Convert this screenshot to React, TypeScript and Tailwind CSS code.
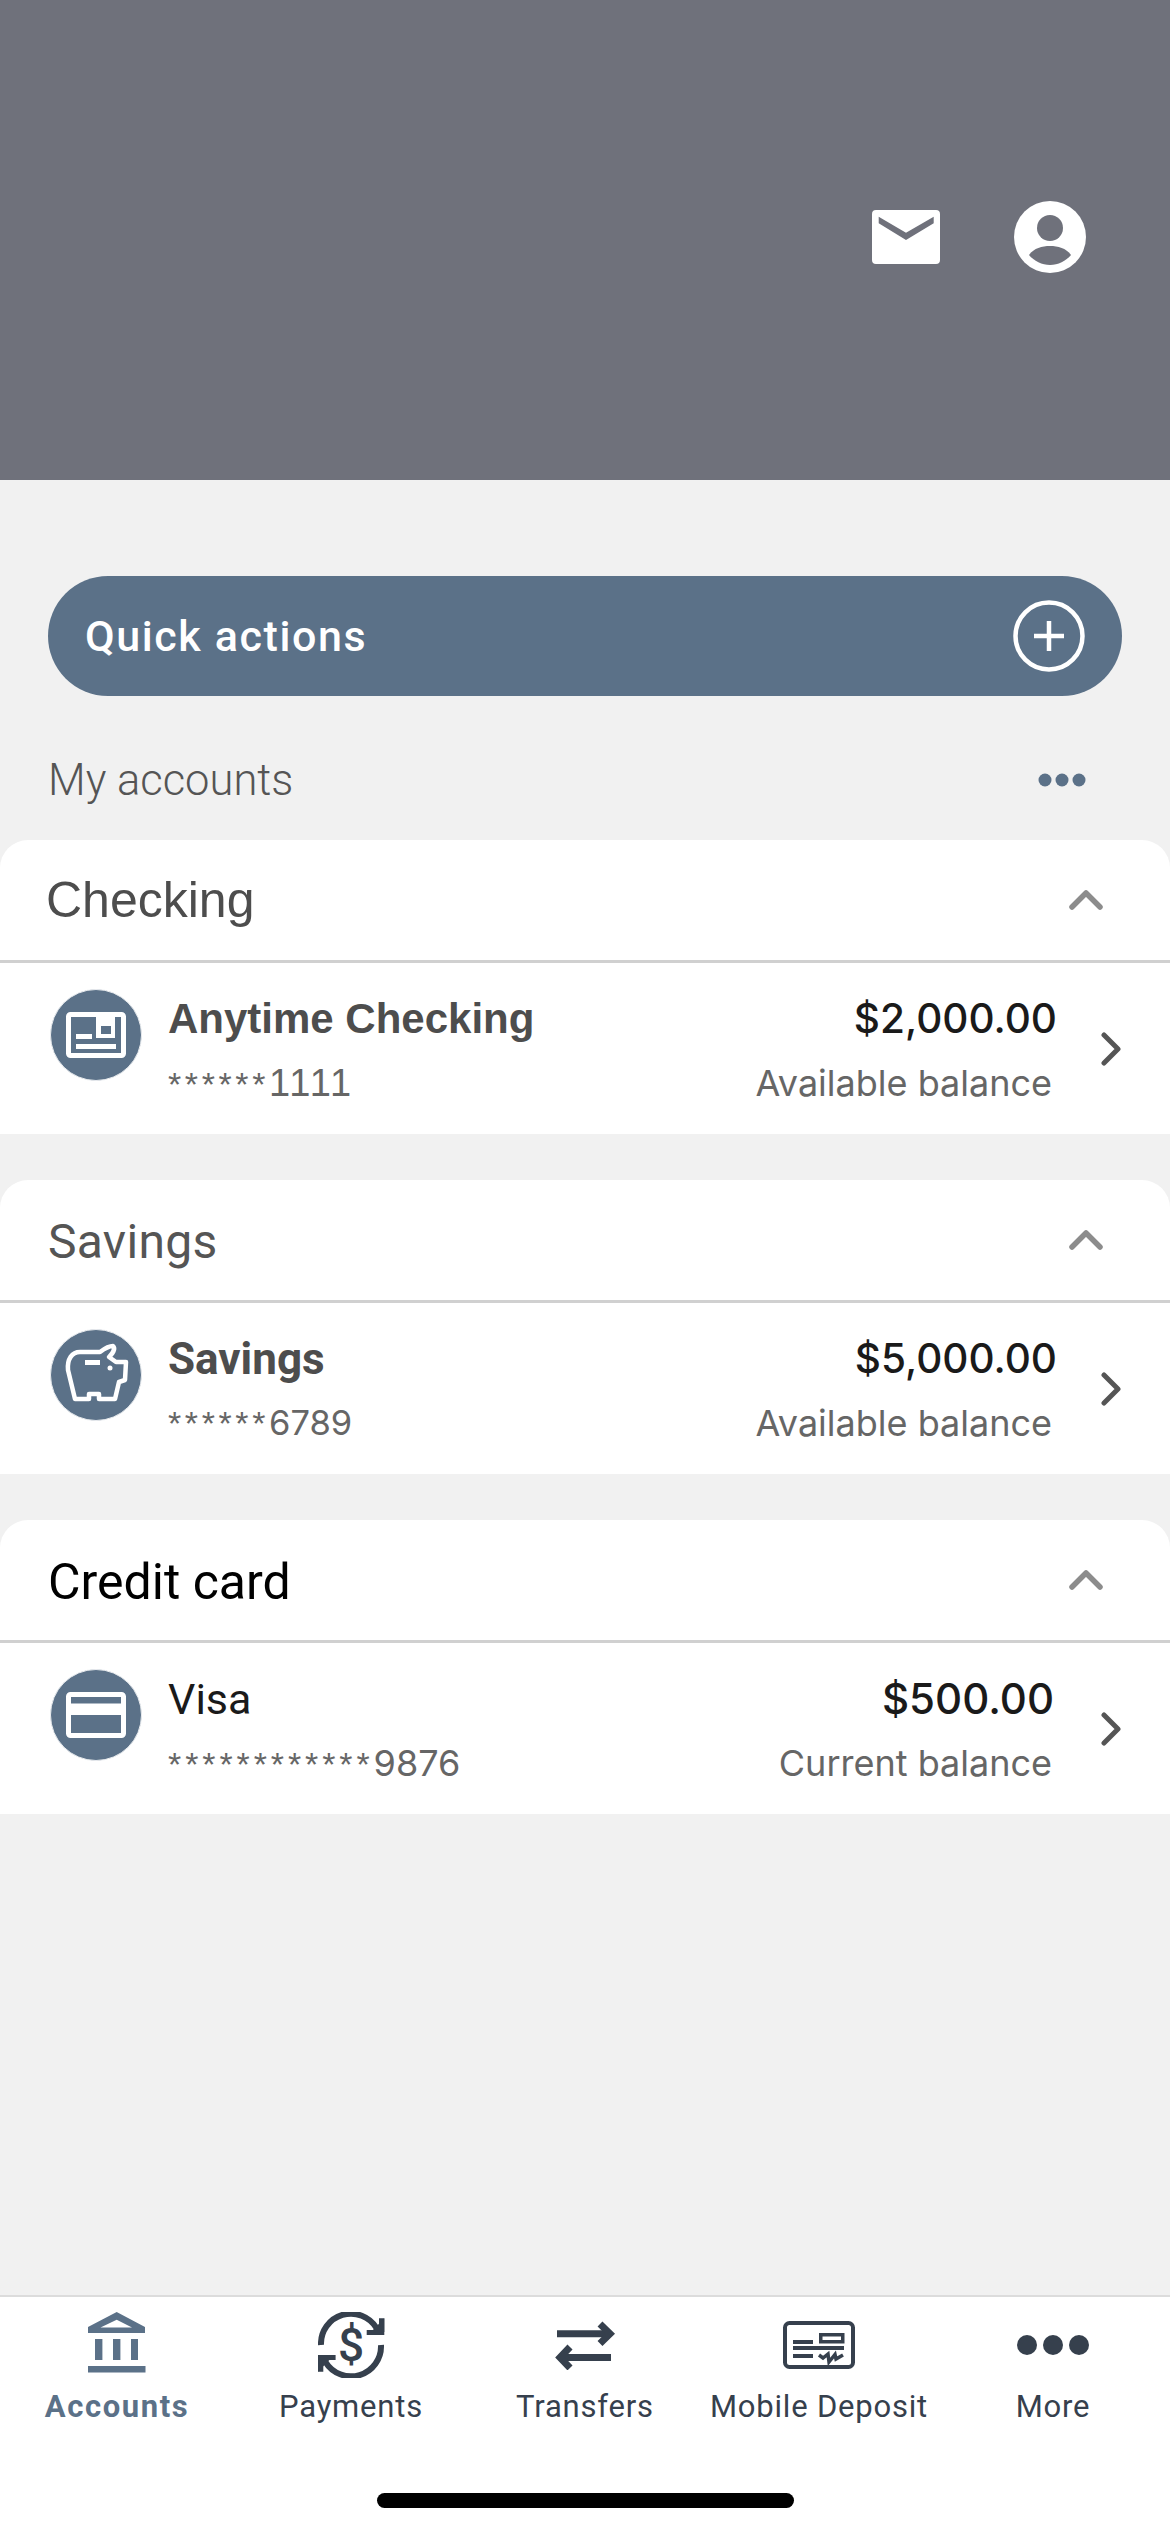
import React from 'react';

const roboto = { fontFamily: 'Roboto, sans-serif' };

function MailIcon() {
  return (
    <svg width="68" height="54" viewBox="0 0 68 54">
      <path fillRule="evenodd" fill="#fff" d="M4 0H64A4 4 0 0 1 68 4V50A4 4 0 0 1 64 54H4A4 4 0 0 1 0 50V4A4 4 0 0 1 4 0ZM6.700 6.700V13.300L34 30L61.700 13.300V6.700L34 22.700Z" />
    </svg>
  );
}

function ProfileIcon() {
  return (
    <svg width="72" height="72" viewBox="0 0 72 72">
      <circle cx="36" cy="36" r="36" fill="#fff" />
      <circle cx="36" cy="27" r="13" fill="#6f717b" />
      <path fill="#6f717b" d="M15 54C20 47 28 45 36 45C44 45 52 47 57 54C52 60 44 64 36 64C28 64 20 60 15 54Z" />
    </svg>
  );
}

function CheckingGlyph() {
  return (
    <>
      <rect x="18.500" y="25.500" width="55" height="41" rx="2" fill="none" stroke="#fff" strokeWidth="5" />
      <path fill="#fff" fillRule="evenodd" d="M46 23H65V49H46ZM51 37V45H61V37Z" />
      <rect x="26" y="45" width="16" height="5" fill="#fff" />
      <rect x="26" y="55" width="40" height="5" fill="#fff" />
    </>
  );
}

function PigGlyph() {
  return (
    <>
      <path
        fill="none"
        stroke="#fff"
        strokeWidth="4.500"
        strokeLinejoin="round"
        d="M30 23H50C54 20 58 17 63 17C65 19 64 23 59 28L66 33H76L75 51L69 53L65 70H49V65H39V70H25L18 41C17 30 22 23 30 23Z"
      />
      <rect x="35" y="31" width="15" height="5" fill="#fff" />
      <circle cx="60" cy="39" r="2.500" fill="#fff" />
    </>
  );
}

function CardGlyph() {
  return (
    <>
      <rect x="18.500" y="25.500" width="55" height="41" rx="2" fill="none" stroke="#fff" strokeWidth="5" />
      <rect x="18" y="34.500" width="56" height="11.500" fill="#fff" />
    </>
  );
}

function AccountIcon({ glyph }: { glyph: React.ReactNode }) {
  return (
    <svg width="92" height="92" viewBox="0 0 92 92" className="shrink-0">
      <circle cx="46" cy="46" r="45.500" fill="#5b7188" stroke="#e9ecef" strokeWidth="1" />
      {glyph}
    </svg>
  );
}

function ChevronUp() {
  return (
    <svg width="34" height="20" viewBox="0 0 34 20">
      <path d="M3 17L17 3L31 17" fill="none" stroke="#8c8c8c" strokeWidth="5.500" strokeLinecap="round" strokeLinejoin="round" />
    </svg>
  );
}

function ChevronRight() {
  return (
    <svg width="20" height="34" viewBox="0 0 20 34" className="shrink-0">
      <path d="M3 3L17 17L3 31" fill="none" stroke="#555" strokeWidth="5" strokeLinecap="round" strokeLinejoin="round" />
    </svg>
  );
}

function BankIcon() {
  return (
    <svg width="58" height="61" viewBox="0 0 58 61" fill="#5b7188" className="mb-[5px]">
      <path fillRule="evenodd" d="M28.700 0L57 15V21H0V15ZM28.700 7.700L12.500 15.600H44Z" />
      <rect x="7" y="27" width="7.400" height="21" />
      <rect x="25" y="27" width="7.400" height="21" />
      <rect x="43" y="27" width="7" height="21" />
      <rect x="0" y="54" width="57.500" height="6.500" />
    </svg>
  );
}

function PaymentsIcon() {
  return (
    <svg width="67" height="66" viewBox="0 0 67 66" fill="none" stroke="#36404d" strokeWidth="6">
      <path d="M3 33A30 30 0 0 1 58.700 16.300" />
      <path d="M63 33A30 30 0 0 1 7.300 49.700" />
      <path fill="#36404d" stroke="none" d="M66.300 6.300V23H48.700V18H61V6.300Z" />
      <path fill="#36404d" stroke="none" d="M0 59.700V43H17.600V48H5.300V59.700Z" />
      <path fill="#36404d" stroke="none" d="M66.300 6.300V20H53Z" />
      <path fill="#36404d" stroke="none" d="M0 59.700V46H13.300Z" />
      <text x="33" y="49" textAnchor="middle" fontSize="46" fontWeight="500" fill="#36404d" stroke="none" fontFamily="Roboto, sans-serif">$</text>
    </svg>
  );
}

function TransfersIcon() {
  return (
    <svg width="62" height="49" viewBox="0 0 62 49" fill="none" stroke="#36404d" strokeWidth="7">
      <path d="M3 12.700H56" />
      <path d="M46 3L56 12.700L46 22.500" />
      <path d="M57 36.500H6" />
      <path d="M16 26L6 36.500L16 47" />
    </svg>
  );
}

function DepositIcon() {
  return (
    <svg width="72" height="48" viewBox="0 0 72 48" fill="none" stroke="#36404d">
      <rect x="2" y="2" width="68" height="44" rx="4.500" strokeWidth="4" />
      <rect x="37.750" y="13.750" width="22" height="7" strokeWidth="3.500" />
      <path d="M10 21H30M10 27H61M10 35H30" strokeWidth="4" />
      <path d="M36 34L40 37L45 33L46 41L52 33.500L53 38L60 34" strokeWidth="3.500" />
    </svg>
  );
}

function MoreIcon() {
  return (
    <svg width="72" height="20" viewBox="0 0 72 20" fill="#36404d">
      <circle cx="10" cy="10" r="10" />
      <circle cx="36" cy="10" r="10" />
      <circle cx="62" cy="10" r="10" />
    </svg>
  );
}

type Account = {
  title: string;
  titleClass: string;
  titleFont: string;
  heading: string;
  headingClass: string;
  headingFont: string;
  mask: string;
  maskClass: string;
  digits: string;
  digitsClass: string;
  digitsFont: string;
  amount: string;
  amountClass: string;
  balance: string;
  glyph: React.ReactNode;
};

const accounts: Account[] = [
  {
    heading: 'Checking',
    headingClass: 'text-[50px] text-[#4d4d4d] pl-[46px]',
    headingFont: '"Liberation Sans", sans-serif',
    title: 'Anytime Checking',
    titleClass: 'text-[42px] font-bold text-[#4d4d4d]',
    titleFont: '"Liberation Sans", sans-serif',
    mask: '******',
    maskClass: 'tracking-[3.600px]',
    digits: '1111',
    digitsClass: 'text-[38px] tracking-[2px]',
    digitsFont: '"Liberation Sans", sans-serif',
    amount: '$2,000.00',
    amountClass: 'text-[40.500px] -mr-[3px]',
    balance: 'Available balance',
    glyph: <CheckingGlyph />,
  },
  {
    heading: 'Savings',
    headingClass: 'text-[48px] tracking-[0.3px] text-[#555] pl-[48px] mt-[3px]',
    headingFont: 'Roboto, sans-serif',
    title: 'Savings',
    titleClass: 'text-[44px] font-bold text-[#4d4d4d]',
    titleFont: 'Roboto, sans-serif',
    mask: '******',
    maskClass: 'tracking-[3.600px]',
    digits: '6789',
    digitsClass: 'text-[34.500px]',
    digitsFont: 'Inter, sans-serif',
    amount: '$5,000.00',
    amountClass: 'text-[40.500px] -mr-[3px]',
    balance: 'Available balance',
    glyph: <PigGlyph />,
  },
  {
    heading: 'Credit card',
    headingClass: 'text-[50px] text-black pl-[48px] mt-[5px]',
    headingFont: 'Roboto, sans-serif',
    title: 'Visa',
    titleClass: 'text-[43px] text-[#1a1a1a]',
    titleFont: 'Roboto, sans-serif',
    mask: '************',
    maskClass: 'tracking-[3.900px]',
    digits: '9876',
    digitsClass: 'text-[36px]',
    digitsFont: 'Inter, sans-serif',
    amount: '$500.00',
    amountClass: 'text-[42px]',
    balance: 'Current balance',
    glyph: <CardGlyph />,
  },
];

function AccountCard({ account }: { account: Account }) {
  return (
    <section className="bg-white rounded-t-[28px]">
      <div className="h-[120px] flex items-center justify-between pr-[67px]">
        <h2 className={account.headingClass} style={{ fontFamily: account.headingFont }}>{account.heading}</h2>
        <ChevronUp />
      </div>
      <div className="h-[3px] bg-[#d0d0d0]" />
      <div className="h-[171px] flex pl-[50px] pr-[49px] pt-[26px]">
        <AccountIcon glyph={account.glyph} />
        <div className="flex-1 pl-[26px] flex flex-col">
          <div className={`${account.titleClass} leading-[48px] mt-[6px]`} style={{ fontFamily: account.titleFont }}>{account.title}</div>
          <div className="mt-[18px] leading-[44px] text-[#666] whitespace-nowrap" style={{ fontFamily: account.digitsFont }}>
            <span className={`text-[34px] ${account.maskClass}`} style={{ fontFamily: '"Liberation Sans", sans-serif' }}>{account.mask}</span>
            <span className={account.digitsClass}>{account.digits}</span>
          </div>
        </div>
        <div className="flex flex-col items-end" style={{ fontFamily: 'Inter, sans-serif' }}>
          <div className={`${account.amountClass} font-medium leading-[48px] text-[#1a1a1a] mt-[6px]`}>{account.amount}</div>
          <div className="mt-[18px] text-[36px] leading-[44px] text-[#666] mr-[2px]">{account.balance}</div>
        </div>
        <div className="ml-[47px] mt-[43px]"><ChevronRight /></div>
      </div>
    </section>
  );
}

const tabs = [
  { label: 'Accounts', icon: <BankIcon />, active: true },
  { label: 'Payments', icon: <PaymentsIcon />, active: false },
  { label: 'Transfers', icon: <TransfersIcon />, active: false },
  { label: 'Mobile Deposit', icon: <DepositIcon />, active: false },
  { label: 'More', icon: <MoreIcon />, active: false },
];

export default function App() {
  return (
    <div className="w-[1170px] h-[2532px] flex flex-col bg-[#f1f1f1] relative overflow-hidden" style={roboto}>
      <header className="h-[480px] bg-[#6f717b] flex items-start justify-end gap-[74px] pt-[201px] pr-[84px] shrink-0">
        <div className="pt-[9px]"><MailIcon /></div>
        <ProfileIcon />
      </header>

      <main className="flex-1">
        <button className="mt-[96px] ml-[48px] w-[1074px] h-[120px] rounded-full bg-[#5b7188] flex items-center justify-between pl-[37px] pr-[37px] text-white">
          <span className="text-[43px] font-medium tracking-[1.600px]">Quick actions</span>
          <svg width="72" height="72" viewBox="0 0 72 72" fill="none" stroke="#fff" strokeWidth="4.500">
            <circle cx="36" cy="36" r="33.500" />
            <path d="M36 21V51M21 36H51" />
          </svg>
        </button>

        <div className="h-[144px] flex items-start justify-between pl-[48px] pr-[84px] pt-[59px]">
          <span className="text-[43.500px] font-light leading-[52px] text-[#555]">My accounts</span>
          <svg width="48" height="14" viewBox="0 0 48 14" fill="#5b7188" className="mt-[18px]">
            <circle cx="7" cy="7" r="6.500" />
            <circle cx="24" cy="7" r="6.500" />
            <circle cx="41" cy="7" r="6.500" />
          </svg>
        </div>

        <div className="flex flex-col gap-[46px]">
          {accounts.map(account => (
            <AccountCard key={account.heading} account={account} />
          ))}
        </div>
      </main>

      <nav className="h-[237px] shrink-0 bg-white border-t-2 border-[#dcdcdc] flex items-start">
        {tabs.map(tab => (
          <div key={tab.label} className="w-[234px] flex flex-col items-center">
            <div className="h-[90px] mt-[3px] flex items-center justify-center">{tab.icon}</div>
            <span className={`mt-[-1px] text-[31px] leading-[36px] whitespace-nowrap ${tab.active ? 'font-bold tracking-[1.600px] text-[#5b7188]' : 'tracking-[0.800px] text-[#36404d]'}`}>
              {tab.label}
            </span>
          </div>
        ))}
      </nav>

      <div className="absolute left-[377px] bottom-[24px] w-[417px] h-[15px] rounded-full bg-black" />
    </div>
  );
}
